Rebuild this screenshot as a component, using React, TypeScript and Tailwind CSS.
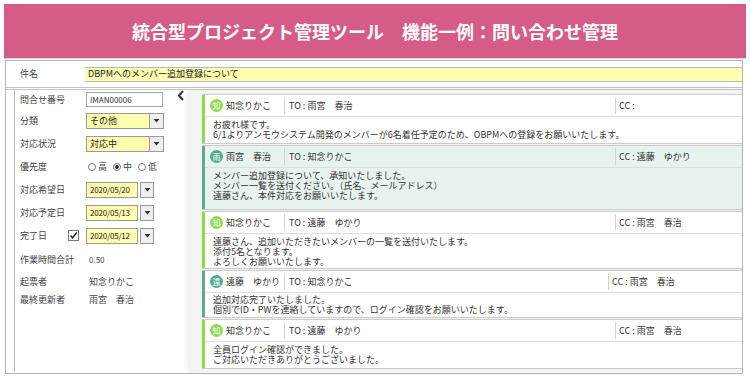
import type { ReactNode } from "react";

type Msg = {
  from: string;
  av: string;
  green: boolean;
  to: string;
  cc: string;
  lines: string[];
  tint?: boolean;
  toW: string;
  bodyCls: string;
};

const messages: Msg[] = [
  {
    from: "知念りかこ",
    av: "知",
    green: true,
    to: "雨宮　春治",
    cc: "",
    lines: [
      "お疲れ様です。",
      "6/1よりアンモウシステム開発のメンバーが6名着任予定のため、OBPMへの登録をお願いいたします。",
    ],
    toW: "w-[331px]",
    bodyCls: "pt-[3px] pb-[3px]",
  },
  {
    from: "雨宮　春治",
    av: "雨",
    green: false,
    to: "知念りかこ",
    cc: "遠藤　ゆかり",
    tint: true,
    lines: [
      "メンバー追加登録について、承知いたしました。",
      "メンバー一覧を送付ください。（氏名、メールアドレス）",
      "遠藤さん、本件対応をお願いいたします。",
    ],
    toW: "w-[331px]",
    bodyCls: "pt-[3px] pb-[8px]",
  },
  {
    from: "知念りかこ",
    av: "知",
    green: true,
    to: "遠藤　ゆかり",
    cc: "雨宮　春治",
    lines: [
      "遠藤さん、追加いただきたいメンバーの一覧を送付いたします。",
      "添付5名となります。",
      "よろしくお願いいたします。",
    ],
    toW: "w-[331px]",
    bodyCls: "pt-[3px] pb-[1px]",
  },
  {
    from: "遠藤　ゆかり",
    av: "遠",
    green: false,
    to: "知念りかこ",
    cc: "雨宮　春治",
    lines: [
      "追加対応完了いたしました。",
      "個別でID・PWを連絡していますので、ログイン確認をお願いいたします。",
    ],
    toW: "w-[324px]",
    bodyCls: "pt-[2px] pb-[2px]",
  },
  {
    from: "知念りかこ",
    av: "知",
    green: true,
    to: "遠藤　ゆかり",
    cc: "雨宮　春治",
    lines: ["全員ログイン確認ができました。", "ご対応いただきありがとうございました。"],
    toW: "w-[331px]",
    bodyCls: "pt-[3px] pb-[3px]",
  },
];

const Row = ({ label, h, children }: { label: string; h: string; children?: ReactNode }) => (
  <div className={`flex items-center ${h}`}>
    <span className="w-[71px] pl-[5px] text-[#444]">{label}</span>
    {children}
  </div>
);

const Arrow = () => (
  <svg width="7" height="5" viewBox="0 0 7 5">
    <path d="M0.5 1 L6.5 1 L3.5 4.5 Z" fill="#333" />
  </svg>
);

const SelectBox = ({ value }: { value: string }) => (
  <div className="flex h-[16px]">
    <div className="flex w-[64px] items-center border border-[#9a9a9a] bg-[#ffffb0] pl-[3px] text-[#222]">
      {value}
    </div>
    <div className="flex w-[14px] items-center justify-center border border-l-0 border-[#9a9a9a] bg-[#efefef]">
      <Arrow />
    </div>
  </div>
);

const DateBox = ({ value }: { value: string }) => (
  <div className="flex h-[16px]">
    <div className="flex w-[52px] items-center border border-[#9a9a9a] bg-[#ffffb0] pl-[3px] text-[8px] tracking-[-0.2px] text-[#222]">
      {value}
    </div>
    <div className="ml-[2px] flex w-[14px] items-center justify-center border border-[#9a9a9a] bg-[#efefef]">
      <Arrow />
    </div>
  </div>
);

const Radio = ({ on }: { on?: boolean }) => (
  <span className="flex h-[8px] w-[8px] items-center justify-center rounded-full border border-[#777] bg-white">
    {on && <span className="h-[4px] w-[4px] rounded-full bg-[#333]" />}
  </span>
);

const Message = ({ m }: { m: Msg }) => (
  <div className={`flex border-y border-[#cbcbcb] ${m.tint ? "bg-[#e8f3ef]" : "bg-white"}`}>
    <div className={`w-[3px] shrink-0 ${m.green ? "bg-[#8fd94a]" : "bg-[#5fa892]"}`} />
    <div className="flex-1">
      <div className="flex h-[22px] items-center border-b border-[#dedede]">
        <div className="flex w-[79px] items-center pl-[5px]">
          <span
            className={`flex h-[13px] w-[13px] items-center justify-center rounded-full text-[8px] leading-none text-white ${
              m.green ? "bg-[#93d852]" : "bg-[#4fab8e]"
            }`}
          >
            {m.av}
          </span>
          <span className="ml-[3px] text-[#333]">{m.from}</span>
        </div>
        <div className={`flex h-[17px] items-center border-l border-[#d4d4d4] pl-[4px] text-[#333] ${m.toW}`}>
          TO : {m.to}
        </div>
        <div className="flex h-[17px] flex-1 items-center border-l border-[#d4d4d4] pl-[3px] text-[#333]">
          CC : {m.cc}
        </div>
      </div>
      {/* one text node per body, lines split by newline */}
      <div className={`whitespace-pre-line pl-[8px] leading-[10px] text-[#333] ${m.bodyCls}`}>
        {m.lines.join("\n")}
      </div>
    </div>
  </div>
);

export default function App() {
  return (
    <div className="h-[381px] w-[750px] overflow-hidden bg-white font-['Noto_Sans_CJK_JP','Noto_Sans',sans-serif] text-[9px]">
      <div className="mx-[4px] mt-[4px] flex h-[54px] items-center justify-center bg-[#d45c86] text-[18px] font-bold text-white">
        統合型プロジェクト管理ツール　機能一例：問い合わせ管理
      </div>
      <div className="mx-[4px] h-[1px] bg-[#d8d2d4]" />

      <div className="ml-[5px] mt-[1px] h-[314px] w-[738px] border border-[#b4b4b4]">
        <div className="flex h-[27px] items-center border-b border-[#c4c4c4]">
          <span className="w-[79px] pl-[14px] text-[#444]">件名</span>
          <div className="flex h-[15px] flex-1 items-center border-y border-[#b8b8b8] bg-[#ffffb4] pl-[3px] text-[#222]">
            DBPMへのメンバー追加登録について
          </div>
        </div>

        <div className="mt-[1px] flex h-[283px] border-t border-[#c4c4c4]">
          <div className="ml-[8px] w-[159px] border-l border-[#b4b4b4]">
            <Row label="問合せ番号" h="h-[19px]">
              <div className="flex h-[15px] w-[77px] items-center border border-[#a8a8a8] bg-white pl-[3px] text-[8px] text-[#333]">
                IMAN00006
              </div>
            </Row>
            <Row label="分類" h="h-[23px]">
              <SelectBox value="その他" />
            </Row>
            <Row label="対応状況" h="h-[23px]">
              <SelectBox value="対応中" />
            </Row>
            <Row label="優先度" h="h-[23px]">
              <div className="flex items-center text-[#444]">
                <span className="ml-[2px]">
                  <Radio />
                </span>
                <span className="ml-[2px]">高</span>
                <span className="ml-[6px]">
                  <Radio on />
                </span>
                <span className="ml-[2px]">中</span>
                <span className="ml-[6px]">
                  <Radio />
                </span>
                <span className="ml-[2px]">低</span>
              </div>
            </Row>
            <Row label="対応希望日" h="h-[23px]">
              <DateBox value="2020/05/20" />
            </Row>
            <Row label="対応予定日" h="h-[23px]">
              <DateBox value="2020/05/13" />
            </Row>
            <div className="flex h-[23px] items-center">
              <span className="w-[53px] pl-[5px] text-[#444]">完了日</span>
              <span className="flex h-[11px] w-[11px] items-center justify-center border border-[#777] bg-white">
                <svg width="9" height="9" viewBox="0 0 9 9">
                  <path d="M1.5 4.5 L3.5 6.8 L7.8 1.5" fill="none" stroke="#222" strokeWidth="1.4" />
                </svg>
              </span>
              <span className="w-[7px]" />
              <DateBox value="2020/05/12" />
            </div>
            <Row label="作業時間合計" h="h-[25px]">
              <span className="pl-[3px] text-[8px] text-[#444]">0.50</span>
            </Row>
            <Row label="起票者" h="h-[19px]">
              <span className="pl-[3px] text-[#444]">知念りかこ</span>
            </Row>
            <Row label="最終更新者" h="h-[18px]">
              <span className="pl-[3px] text-[#444]">雨宮　春治</span>
            </Row>
          </div>

          <div className="w-[17px] pl-[4px]">
            <svg width="8" height="11" viewBox="0 0 8 11">
              <path d="M6 1 L2 5.5 L6 10" fill="none" stroke="#333" strokeWidth="2" />
            </svg>
          </div>

          <div className="flex flex-1 flex-col gap-[1px] bg-[#f3f3f3] pl-[12px] pt-[4px] shadow-[-3px_0_5px_rgba(0,0,0,0.07)]">
            {messages.map((m, i) => (
              <Message key={i} m={m} />
            ))}
          </div>
        </div>
      </div>
    </div>
  );
}
